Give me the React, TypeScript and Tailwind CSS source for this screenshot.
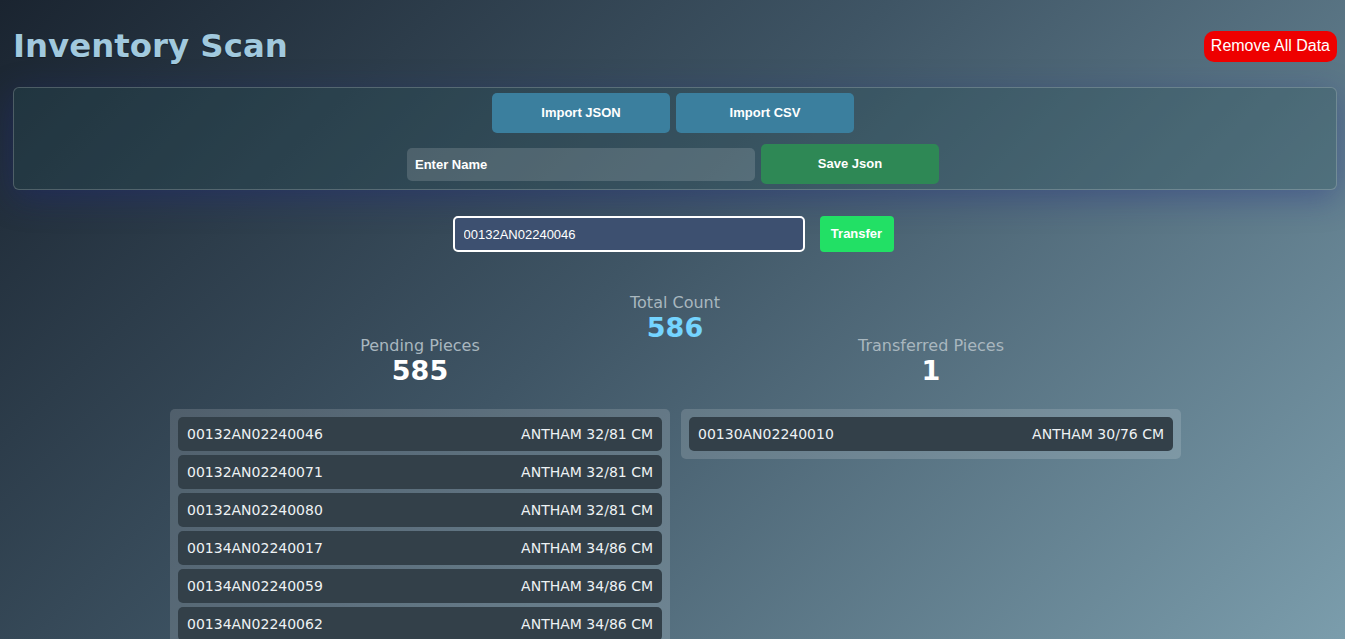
import React, { useState } from 'react';

interface Piece {
  id: string;
  size: string;
}

const pending: Piece[] = [
  { id: '00132AN02240046', size: 'ANTHAM 32/81 CM' },
  { id: '00132AN02240071', size: 'ANTHAM 32/81 CM' },
  { id: '00132AN02240080', size: 'ANTHAM 32/81 CM' },
  { id: '00134AN02240017', size: 'ANTHAM 34/86 CM' },
  { id: '00134AN02240059', size: 'ANTHAM 34/86 CM' },
  { id: '00134AN02240062', size: 'ANTHAM 34/86 CM' },
  { id: '00134AN02240078', size: 'ANTHAM 34/86 CM' },
  { id: '00136AN02240011', size: 'ANTHAM 36/91 CM' },
];

const transferred: Piece[] = [{ id: '00130AN02240010', size: 'ANTHAM 30/76 CM' }];

function PieceList({ items }: { items: Piece[] }) {
  return (
    <div className="w-[500px] bg-white/15 rounded-[5px] p-2 flex flex-col gap-1 self-start">
      {items.map((p) => (
        <div
          key={p.id}
          className="h-[34px] bg-[#334049] rounded-[5px] px-[9px] flex items-center justify-between text-[14px] text-[#eef2f4] font-['DejaVu_Sans',sans-serif]"
        >
          <span>{p.id}</span>
          <span>{p.size}</span>
        </div>
      ))}
    </div>
  );
}

function Stat({ label, value }: { label: string; value: number }) {
  return (
    <div className="w-[500px] flex flex-col items-center">
      <span className="text-[16px] leading-none text-[#a9b7bf]">{label}</span>
      <span className="mt-[3px] text-[27px] leading-none font-bold text-white">{value}</span>
    </div>
  );
}

export default function App() {
  const [scan, setScan] = useState('00132AN02240046');
  const [name, setName] = useState('');

  return (
    <div className="min-h-screen bg-fixed bg-[linear-gradient(135deg,#1a2430_0%,#3f5565_45%,#7b9dac_100%)] pl-[13px] pr-[8px] pt-[15px] pb-10">
      <header className="h-[62px] flex items-center justify-between">
        <h1 className="text-[32.4px] font-bold text-[#a1c9de] font-['DejaVu_Sans',sans-serif] [text-shadow:0_1px_1px_rgba(0,0,0,0.35)]">
          Inventory Scan
        </h1>
        <button className="h-[31px] px-[7px] rounded-[10px] bg-[#ee0000] text-white text-[16px] font-['Liberation_Sans',Arial,sans-serif]">
          Remove All Data
        </button>
      </header>

      <section className="mt-[10px] border border-white/20 rounded-[6px] bg-[rgba(40,80,85,0.3)] shadow-[0_8px_32px_rgba(31,38,135,0.37)] pt-[5px] pb-[5px] pr-[4px] flex flex-col items-center gap-[11px] font-['Liberation_Sans',Arial,sans-serif]">
        <div className="flex gap-[6px]">
          <button className="w-[178px] h-[40px] rounded-[5px] bg-[#3b7f9e] text-white text-[13px] font-bold">
            Import JSON
          </button>
          <button className="w-[178px] h-[40px] rounded-[5px] bg-[#3b7f9e] text-white text-[13px] font-bold">
            Import CSV
          </button>
        </div>
        <div className="flex items-center gap-[6px]">
          <input
            value={name}
            onChange={(e) => setName(e.target.value)}
            placeholder="Enter Name"
            className="w-[348px] h-[33px] rounded-[5px] bg-white/15 px-2 text-[13px] font-bold text-white placeholder:text-white outline-none"
          />
          <button className="w-[178px] h-[40px] rounded-[5px] bg-[#2e8855] text-white text-[13px] font-bold">
            Save Json
          </button>
        </div>
      </section>

      <div className="mt-[26px] pr-[4px] flex justify-center items-center gap-[15px] font-['Liberation_Sans',Arial,sans-serif]">
        <input
          value={scan}
          onChange={(e) => setScan(e.target.value)}
          className="w-[352px] h-[36px] rounded-[5px] border-2 border-white bg-[#3d5070] px-[9px] text-[13px] text-white outline-none"
        />
        <button className="w-[74px] h-[36px] rounded-[4px] bg-[#22e065] text-white text-[13px] font-bold">
          Transfer
        </button>
      </div>

      <div className="font-['DejaVu_Sans',sans-serif]">
        <div className="mt-[43px] flex flex-col items-center">
          <span className="text-[16px] leading-none text-[#a9b7bf]">Total Count</span>
          <span className="mt-[3px] text-[27px] leading-none font-bold text-sky-300">586</span>
        </div>
        <div className="-mt-[3px] flex justify-center gap-[11px] pl-[1px]">
          <Stat label="Pending Pieces" value={585} />
          <Stat label="Transferred Pieces" value={1} />
        </div>
      </div>

      <div className="mt-[25px] flex justify-center items-start gap-[11px] pl-[1px]">
        <PieceList items={pending} />
        <PieceList items={transferred} />
      </div>
    </div>
  );
}
